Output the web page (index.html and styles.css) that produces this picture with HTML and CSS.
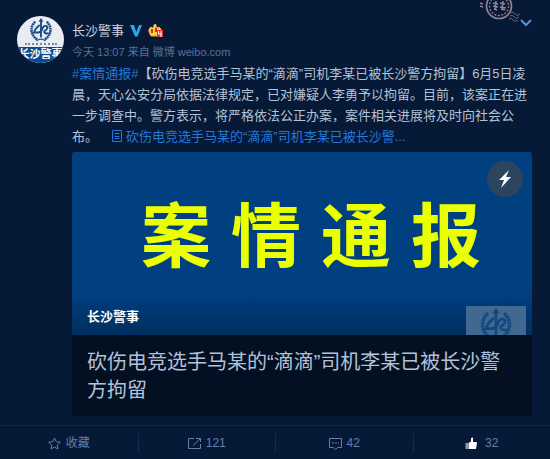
FILE: index.html
```html
<!DOCTYPE html>
<html lang="zh-CN">
<head>
<meta charset="utf-8">
<meta name="viewport" content="width=device-width, initial-scale=1">
<title>长沙警事</title>
<link rel="stylesheet" href="styles.css">
</head>
<body>
<svg class="defs" aria-hidden="true">
  <symbol id="emblem" viewBox="0 0 40 38">
    <g fill="none" stroke="currentColor">
      <path d="M11 6C3 12 2 26 14 34M29 6C37 12 38 26 26 34" stroke-width="4" stroke-dasharray="3 .7"/>
      <path d="M20 3V31" stroke-width="3"/>
      <path d="M18 11C14 14 10 18 9 23H16C20 22 22 19 23 15C25 11 31 12 30 16C29 20 24 20 25 22C26 25 30 25 32 24" stroke-width="3"/>
      <path d="M13 36Q20 31 27 36" stroke-width="2"/>
    </g>
    <path d="M20 0L24 6H16Z" fill="currentColor"/>
  </symbol>
</svg>
<article class="post">
  <header class="head">
    <a class="avatar" href="#" aria-label="长沙警事">
      <svg class="avatar-emblem"><use href="#emblem"/></svg>
      <span class="avatar-rule"></span>
      <span class="avatar-name">长沙警事</span>
    </a>
    <div class="who">
      <div class="name-row">
        <a class="name" href="#">长沙警事</a>
        <svg class="verified" viewBox="0 0 12 12" aria-hidden="true"><path d="M0 0H4L6.300 7 9 0H12L7.500 11.500H5Z" fill="#2ba5ee"/></svg>
        <svg class="crown" viewBox="0 0 16 14" aria-hidden="true">
          <path d="M1 5L3 3 5 4 7 1 9 4 11 3 13 5V9L12 12H3L1 8Z" fill="#fbd04a" stroke="#f7a51c"/>
          <circle cx="7" cy="1.500" r="1.500" fill="#fbd04a"/>
          <path d="M4 5V9M8 4V8" stroke="#d92b20" stroke-width="2"/>
          <rect x="9" y="6" width="6" height="7" fill="#e5352b"/>
          <path d="M10.500 7V10H14M13 7V13" fill="none" stroke="#fff"/>
        </svg>
      </div>
      <p class="meta"><a href="#">今天 13:07</a> 来自 <a href="#">微博 weibo.com</a></p>
    </div>
    <svg class="stamp" viewBox="0 0 42 22" aria-hidden="true">
      <g fill="none" stroke="#93818f">
        <circle cx="19" cy="6" r="12.500" stroke-width="1.700"/>
        <circle cx="19" cy="6" r="9.500" stroke-width="1.300" stroke-dasharray="2 1.500"/>
        <path d="M0 3l3 1M0 6l3 1M13 3l5 1m-5 2 5 1m-2-6-1 9M20 3l5 1m-5 3 6 1m-3-7-1 9M14 9l3 1M21 9l4 1" stroke-width="1.500"/>
        <path d="M31 13q2-2 4 1t5 0M30 16q2-2 4 1t5 0M29 19q2-2 4 1t5 0" opacity=".7"/>
      </g>
    </svg>
    <button class="more" type="button" aria-label="更多">
      <svg viewBox="0 0 12 8" aria-hidden="true"><path d="M1 1L6 6L11 1" fill="none" stroke="#5a92dc" stroke-width="2"/></svg>
    </button>
  </header>
  <div class="body">
    <p class="text"><a href="#">#案情通报#</a>【砍伤电竞选手马某的“滴滴”司机李某已被长沙警方拘留】6月5日凌晨，天心公安分局依据法律规定，已对嫌疑人李勇予以拘留。目前，该案正在进一步调查中。警方表示，将严格依法公正办案，案件相关进展将及时向社会公布。<a class="doc" href="#"><svg viewBox="0 0 10 12" aria-hidden="true"><path d="M.5 .5H9.500V11.500H.5ZM2.500 3.500H7.500M2.500 6.500H7.500M2.500 8.500H7.500" fill="none" stroke="currentColor"/></svg>砍伤电竞选手马某的“滴滴”司机李某已被长沙警...</a></p>
    <a class="card" href="#">
      <div class="banner">
        <div class="headline"><span>案</span><span>情</span><span>通</span><span>报</span></div>
        <span class="flash"><svg viewBox="0 0 12 18" aria-hidden="true"><path d="M10 0L0 10H5L2 18L12 7H7Z" fill="#fff"/></svg></span>
        <strong class="source">长沙警事</strong>
        <span class="mark"><svg><use href="#emblem"/></svg></span>
      </div>
      <h2 class="title">砍伤电竞选手马某的“滴滴”司机李某已被长沙警方拘留</h2>
    </a>
  </div>
  <footer class="actions">
    <button type="button"><svg class="icon" viewBox="0 0 13 13" aria-hidden="true"><path d="M6.500 1L8.200 4.700 12.300 5.200 9.300 8 10 12 6.500 10 3 12 3.700 8 .7 5.200 4.800 4.700Z" fill="none" stroke="currentColor"/></svg>收藏</button>
    <button type="button"><svg class="icon" viewBox="0 0 13 13" aria-hidden="true"><path d="M6 1.500H.5V11.500H12.500V7M8 1.500H12.500V5M12.500 1.500L5 8.500" fill="none" stroke="currentColor"/></svg>121</button>
    <button type="button"><svg class="icon" viewBox="0 0 13 13" aria-hidden="true"><path d="M.5 1.500H12.500V10.500H8.500L6.500 12.500 4.500 10.500H.5Z" fill="none" stroke="currentColor"/><path d="M3 6H10" stroke="currentColor" stroke-dasharray="2 1"/></svg>42</button>
    <button class="liked" type="button"><svg class="icon" viewBox="0 0 13 13" aria-hidden="true"><path d="M.5 6H3V12H.5Z" fill="#8f9bab"/><path d="M3.500 6L6 4.500V1L8 .5V5H11.500L12 6 11 12H3.500Z" fill="#fff"/></svg>32</button>
  </footer>
</article>
</body>
</html>
```
FILE: styles.css
```css
* { box-sizing: border-box; }
body {
  margin: 0;
  background: #061a38;
  color: #b4c2d6;
  font: 13px/21px "Liberation Sans", "Noto Sans CJK SC", sans-serif;
}
a { color: inherit; text-decoration: none; }
p, h2 { margin: 0; }
svg { display: block; }
.defs { position: absolute; width: 0; height: 0; }
.post { position: relative; }
.head { display: flex; gap: 8px; padding: 16px 18px 0 17px; }
.avatar {
  display: flex;
  flex-direction: column;
  align-items: center;
  width: 47px;
  height: 47px;
  border-radius: 50%;
  overflow: hidden;
  background: #e9edf2;
  color: #174c86;
}
.avatar-emblem { width: 28px; height: 24px; margin-top: 2px; flex: none; }
.avatar-rule { width: 32px; border-top: 2px dotted #6f8cae; margin: 1px 0 2px; }
.avatar-name {
  align-self: stretch;
  display: flex;
  justify-content: center;
  flex: 1;
  background: #0b4a8b;
  color: #fff;
  font-size: 11px;
  font-weight: bold;
  line-height: 14px;
  white-space: nowrap;
}
.who { flex: 1; padding-top: 4px; }
.name-row { display: flex; align-items: center; gap: 6px; }
.name { color: #c8d2e0; }
.verified { width: 12px; height: 12px; }
.crown { width: 16px; height: 14px; }
.meta { margin-top: 1px; font-size: 11px; color: #5b7096; }
.stamp { position: absolute; top: 0; right: 28px; width: 42px; height: 22px; }
.more { align-self: flex-start; padding: 0; border: 0; background: none; margin-top: 3px; }
.more svg { width: 12px; height: 8px; }
.body { padding: 0 18px 9px 72px; }
.text a { color: #2478d8; }
.text .doc { margin-left: 14px; }
.doc svg { display: inline-block; width: 10px; height: 12px; margin-right: 4px; vertical-align: -1px; }
.card { display: block; margin-top: 5px; background: #021022; }
.banner {
  position: relative;
  height: 183px;
  background: linear-gradient(#003f80 76%, #00305f);
  border-radius: 2px 2px 0 0;
}
.headline {
  display: flex;
  justify-content: center;
  gap: 20px;
  padding: 36px 0 0 18px;
  color: #eaff00;
  font-size: 70px;
  font-weight: bold;
  line-height: 100px;
}
.flash {
  position: absolute;
  top: 9px;
  right: 9px;
  display: grid;
  place-items: center;
  width: 36px;
  height: 36px;
  border-radius: 50%;
  background: #2c445e;
}
.flash svg { width: 12px; height: 18px; }
.source { position: absolute; left: 15px; bottom: 8px; color: #fff; }
.mark {
  position: absolute;
  right: 6px;
  bottom: 0;
  display: flex;
  justify-content: center;
  width: 60px;
  height: 29px;
  padding-top: 2px;
  overflow: hidden;
  background: #41698f;
  color: #124780;
}
.mark svg { width: 36px; height: 34px; flex: none; }
.title {
  padding: 13px 15px 12px;
  color: #b4c2d9;
  font-size: 20px;
  font-weight: normal;
  line-height: 28px;
}
.actions {
  display: grid;
  grid-template-columns: repeat(4, 1fr);
  padding: 7px 0 6px;
  border-top: 1px solid #10274a;
}
.actions button {
  display: flex;
  align-items: center;
  justify-content: center;
  gap: 5px;
  height: 20px;
  padding: 0;
  border: 0;
  background: none;
  color: #657fa8;
  font: inherit;
  font-size: 12px;
}
.actions button + button { border-left: 1px solid #142c50; }
.actions .liked { gap: 7px; }
.icon { width: 13px; height: 13px; }
```
